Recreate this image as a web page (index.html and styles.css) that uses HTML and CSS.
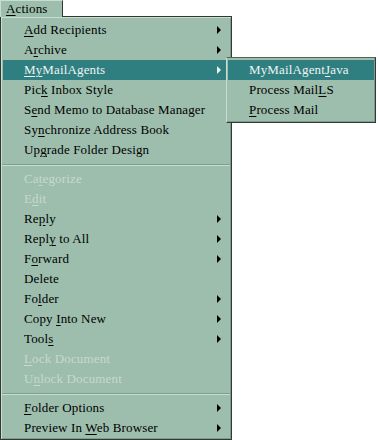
FILE: index.html
```html
<!DOCTYPE html>
<html lang="en">
  <head>
    <meta charset="UTF-8" />
    <title>Actions menu</title>
    <link rel="stylesheet" href="styles.css">
  </head>

  <body>
    <div class="menubar">
      <span class="tab"><u>A</u>ctions</span>
    </div>

    <div class="menu">
      <div class="item sub"><u>A</u>dd Recipients</div>
      <div class="item sub">A<u>r</u>chive</div>
      <div class="item sub active">
        <u>My</u>MailAgents
        <!-- cascaded submenu -->
        <div class="submenu">
          <div class="item active">MyMailAgent<u>J</u>ava</div>
          <div class="item">Process Mail<u>L</u>S</div>
          <div class="item"><u>P</u>rocess Mail</div>
        </div>
      </div>
      <div class="item">Pic<u>k</u> Inbox Style</div>
      <div class="item">S<u>e</u>nd Memo to Database Manager</div>
      <div class="item">Sy<u>n</u>chronize Address Book</div>
      <div class="item">Up<u>g</u>rade Folder Design</div>

      <div class="sep"></div>

      <div class="item off">Ca<u>t</u>egorize</div>
      <div class="item off">E<u>d</u>it</div>
      <div class="item sub">Re<u>p</u>ly</div>
      <div class="item sub">Repl<u>y</u> to All</div>
      <div class="item sub">F<u>o</u>rward</div>
      <div class="item">Delete</div>
      <div class="item sub">Fo<u>l</u>der</div>
      <div class="item sub">Copy <u>I</u>nto New</div>
      <div class="item sub">Tool<u>s</u></div>
      <div class="item off"><u>L</u>ock Document</div>
      <div class="item off">U<u>n</u>lock Document</div>

      <div class="sep"></div>

      <div class="item sub"><u>F</u>older Options</div>
      <div class="item sub">Preview In <u>W</u>eb Browser</div>
    </div>
  </body>
</html>
```

FILE: styles.css
```css
* {
  box-sizing: border-box;
  margin: 0;
  padding: 0;
}

:root {
  --sage: #9dbead;
  --teal: #2f7f80;
  --dark: #2f3a35;
  --light: #c9ddd2;
}

body {
  background: #fff;
  font-family: "Liberation Serif", serif;
  font-size: 13px;
  letter-spacing: 0.15px;
  color: #000;
  width: 378px;
  height: 440px;
  overflow: hidden;
}

u {
  text-decoration-thickness: 1px;
  text-underline-offset: 2px;
}

.menubar {
  display: flex;
  height: 16px;
}

.tab {
  width: 63px;
  height: 17px;
  padding: 0 0 0 5px;
  line-height: 15px;
  background: var(--sage);
  border-top: 1px solid var(--light);
  border-left: 1px solid var(--light);
  border-right: 1px solid var(--dark);

  /* sits over the menu's top border */
  position: relative;
  z-index: 2;
}

.menu {
  width: 232px;
  height: 424px;
  background: var(--sage);
  border: 1px solid var(--dark);
  box-shadow: inset 1px 1px 0 var(--light), inset -1px -1px 0 #7f9d8e;
  padding: 3px 2px 0 2px;
  display: flex;
  flex-direction: column;
}

.item {
  height: 20px;
  line-height: 20px;
  padding-left: 21px;
  white-space: nowrap;
  position: relative;
}

.item.sub::after {
  content: "";
  position: absolute;
  right: 8px;
  top: 6px;
  border-left: 4px solid #000;
  border-top: 4px solid transparent;
  border-bottom: 4px solid transparent;
}

.item.active {
  background: var(--teal);
  color: #eef4f2;
}

.item.active.sub::after {
  border-left-color: #eef4f2;
}

.item.off {
  color: #c7d8cf;
}

.sep {
  height: 9px;
  display: flex;
  flex-direction: column;
  justify-content: center;
}

.sep::before {
  content: "";
  height: 1px;
  background: #7e9d8d;
  border-bottom: 1px solid var(--light);
  box-sizing: content-box;
  margin: 0 -1px;
}

.submenu {
  position: absolute;
  left: 223px;
  top: -3px;
  width: 150px;
  background: var(--sage);
  border: 1px solid var(--dark);
  border-top-color: #54655c;
  border-left-color: var(--light);
  box-shadow: inset -1px -1px 0 #7f9d8e;
  padding: 2px 1px 2px 1px;
  color: #000;
  z-index: 3;
}

.submenu .item {
  padding-left: 21px;
}
```
